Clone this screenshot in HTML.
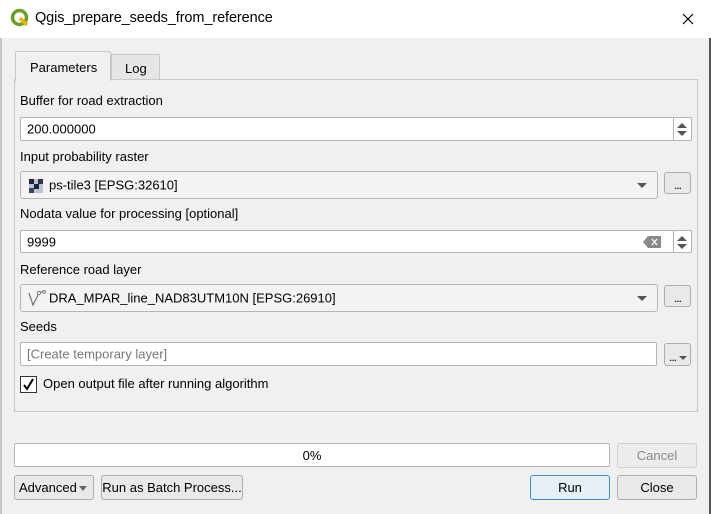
<!DOCTYPE html>
<html><head><style>
*{box-sizing:border-box;margin:0;padding:0}
body{width:711px;height:514px;overflow:hidden;background:#f0f0f0;font-family:"Liberation Sans",sans-serif;font-size:13px;color:#000;position:relative}
.a{position:absolute}
.title{left:0;top:0;width:711px;height:38px;background:#fff}
.inp{background:#fff;border:1px solid #b5b5b5;border-radius:2px}
.combo{background:#f3f3f3;border:1px solid #b5b5b5;border-radius:3px}
.btn{background:#e9e9e9;border:1px solid #adadad;border-radius:3px;text-align:center}
.lbl{left:20px}
.txt{left:6px;top:50%;transform:translateY(-50%);white-space:nowrap}
.arrow{width:0;height:0;border-left:5px solid transparent;border-right:5px solid transparent;border-top:5px solid #555}
.spin{border-left:1px solid #b5b5b5;width:18px;height:100%;right:0;top:0}
.dots{font-size:12px;position:absolute;left:0;width:100%;top:5px;letter-spacing:-1px}
</style></head><body>
<div class="a title"></div>
<svg class="a" style="left:10px;top:8px" width="20" height="20" viewBox="0 0 20 20"><circle cx="9.5" cy="9.5" r="7" fill="none" stroke="#6b9e2e" stroke-width="3.5"/><path d="M10 10 L17 17" stroke="#f0b400" stroke-width="3.5"/></svg>
<div class="a" style="left:35px;top:10px;font-size:14.5px;letter-spacing:-0.1px">Qgis_prepare_seeds_from_reference</div>
<svg class="a" style="left:682px;top:13px" width="12" height="12"><path d="M1 1L11 11M11 1L1 11" stroke="#000" stroke-width="1.2"/></svg>
<div class="a" style="left:0;top:38px;width:2px;height:476px;background:#c8c8c8"></div>
<div class="a" style="left:709px;top:38px;width:2px;height:476px;background:#555"></div>

<div class="a" style="left:14px;top:79px;width:684px;height:333px;border:1px solid #c8c8c8;background:#f0f0f0"></div>
<div class="a" style="left:15px;top:51px;width:96px;height:30px;background:#f0f0f0;border:1px solid #c8c8c8;border-bottom:none;border-radius:2px 2px 0 0"><div style="position:absolute;left:14px;top:8px">Parameters</div></div>
<div class="a" style="left:111px;top:54px;width:49px;height:25px;background:#e6e6e6;border:1px solid #c8c8c8;border-bottom:none"><div style="position:absolute;left:13px;top:6px">Log</div></div>

<div class="a lbl" style="top:93px">Buffer for road extraction</div>
<div class="a inp" style="left:20px;top:117px;width:672px;height:24px"><div class="a txt">200.000000</div><div class="a spin"><div class="a arrow" style="left:3px;top:5px;border-top:none;border-bottom:5px solid #555"></div><div class="a arrow" style="left:3px;top:13px"></div></div></div>

<div class="a lbl" style="top:149px">Input probability raster</div>
<div class="a combo" style="left:20px;top:171px;width:638px;height:28px"><svg class="a" style="left:8px;top:7px" width="14" height="14"><rect width="14" height="14" fill="#b8c4d8"/><rect x="0" y="0" width="5" height="5" fill="#223"/><rect x="9" y="0" width="5" height="5" fill="#334"/><rect x="5" y="5" width="5" height="5" fill="#223"/><rect x="0" y="9" width="5" height="5" fill="#445"/></svg><div class="a txt" style="left:28px">ps-tile3 [EPSG:32610]</div><div class="a arrow" style="right:10px;top:11px"></div></div>
<div class="a btn" style="left:664px;top:172px;width:27px;height:22px"><span class="dots">...</span></div>

<div class="a lbl" style="top:206px">Nodata value for processing [optional]</div>
<div class="a inp" style="left:20px;top:230px;width:672px;height:23px"><div class="a txt">9999</div><svg class="a" style="right:30px;top:5px" width="18" height="12"><path d="M5 0H18V12H5L0 6Z" fill="#8a8a8a"/><path d="M9 3L14 9M14 3L9 9" stroke="#fff" stroke-width="1.3"/></svg><div class="a spin"><div class="a arrow" style="left:3px;top:5px;border-top:none;border-bottom:5px solid #555"></div><div class="a arrow" style="left:3px;top:13px"></div></div></div>

<div class="a lbl" style="top:262px">Reference road layer</div>
<div class="a combo" style="left:20px;top:284px;width:638px;height:28px"><svg class="a" style="left:6px;top:5px" width="20" height="18"><path d="M2 3L6 15L12 3L17 1" fill="none" stroke="#777" stroke-width="1.2"/><circle cx="12" cy="3" r="1.6" fill="#fff" stroke="#777"/><circle cx="17" cy="1.8" r="1.4" fill="#fff" stroke="#777"/></svg><div class="a txt" style="left:28px">DRA_MPAR_line_NAD83UTM10N [EPSG:26910]</div><div class="a arrow" style="right:10px;top:11px"></div></div>
<div class="a btn" style="left:664px;top:285px;width:27px;height:22px"><span class="dots">...</span></div>

<div class="a lbl" style="top:319px">Seeds</div>
<div class="a inp" style="left:20px;top:342px;width:637px;height:24px"><div class="a txt" style="color:#777">[Create temporary layer]</div></div>
<div class="a btn" style="left:664px;top:343px;width:27px;height:23px"><span class="dots" style="left:4px;width:auto;top:6px">...</span><div class="a arrow" style="right:3px;top:12px;border-width:4px 4px 0 4px"></div></div>

<div class="a" style="left:20px;top:376px;width:17px;height:17px;background:#fff;border:1px solid #333"></div>
<svg class="a" style="left:22px;top:378px" width="13" height="13"><path d="M2 7L5 11L11 1" fill="none" stroke="#000" stroke-width="2"/></svg>
<div class="a" style="left:43px;top:376px">Open output file after running algorithm</div>

<div class="a inp" style="left:14px;top:443px;width:596px;height:24px;border-radius:2px"><div class="a" style="left:0;width:100%;top:4px;text-align:center">0%</div></div>
<div class="a btn" style="left:617px;top:443px;width:80px;height:25px;color:#888;line-height:23px;background:#ececec;border-color:#cfcfcf">Cancel</div>
<div class="a btn" style="left:14px;top:475px;width:80px;height:25px;line-height:23px;text-align:left;padding-left:4px">Advanced<div class="a arrow" style="right:6px;top:10px;border-width:5px 4px 0 4px;border-top-color:#666"></div></div>
<div class="a btn" style="left:101px;top:475px;width:142px;height:25px;line-height:23px">Run as Batch Process...</div>
<div class="a btn" style="left:530px;top:475px;width:80px;height:25px;line-height:23px;border-color:#3c8fd8;background:#e6eef6">Run</div>
<div class="a btn" style="left:617px;top:475px;width:80px;height:25px;line-height:23px">Close</div>
</body></html>
